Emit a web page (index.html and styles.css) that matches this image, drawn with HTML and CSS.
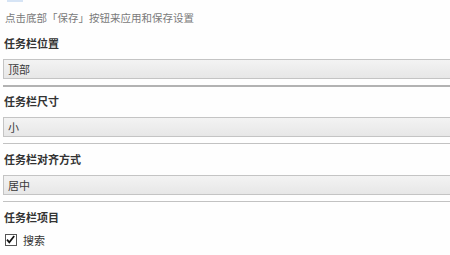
FILE: index.html
```html
<!DOCTYPE html>
<html lang="zh-CN">
<head>
<meta charset="utf-8">
<title>任务栏设置</title>
<link rel="stylesheet" href="styles.css">
</head>
<body>
<div class="page">
  <div class="stub"></div>
  <p class="hint">点击底部「保存」按钮来应用和保存设置</p>

  <section class="group">
    <h3 class="label">任务栏位置</h3>
    <div class="select">顶部</div>
    <div class="divider divider-strong"></div>
  </section>

  <section class="group">
    <h3 class="label">任务栏尺寸</h3>
    <div class="select">小</div>
    <div class="divider"></div>
  </section>

  <section class="group">
    <h3 class="label">任务栏对齐方式</h3>
    <div class="select">居中</div>
    <div class="divider"></div>
  </section>

  <section class="group">
    <h3 class="label">任务栏项目</h3>
    <label class="check">
      <span class="box">
        <svg width="11" height="11" viewBox="0 0 11 11"><path d="M2 5.6 L4.3 8.3 L9.2 2" fill="none" stroke="#111" stroke-width="1.7"/></svg>
      </span>
      <span class="check-text">搜索</span>
    </label>
  </section>
</div>
</body>
</html>
```

FILE: styles.css
```css
html, body {
  margin: 0;
  padding: 0;
  background: #fefefe;
}
body {
  font-family: "Noto Sans CJK SC", "Noto Sans", sans-serif;
  width: 450px;
  height: 255px;
  overflow: hidden;
}
.page {
  display: flex;
  flex-direction: column;
  padding-left: 3px;
}
.stub {
  width: 16px;
  height: 2px;
  margin-left: 4px;
  background: #d6e4f5;
}
.hint {
  margin: 10px 0 0 2px;
  font-size: 10.5px;
  line-height: 12px;
  color: #7a7a7a;
}
.group {
  display: flex;
  flex-direction: column;
}
.label {
  margin: 12px 0 0 1px;
  font-size: 11px;
  line-height: 14px;
  font-weight: 700;
  color: #333;
}
.group + .group .label {
  margin-top: 8px;
}
.select {
  margin-top: 9px;
  height: 18px;
  border: 1px solid #c4c4c4;
  border-right: none;
  background: linear-gradient(#f3f3f3, #e7e7e7);
  font-size: 11px;
  line-height: 18px;
  padding-left: 4px;
  color: #3a3a3a;
}
.divider {
  margin-top: 6px;
  height: 1px;
  background: #c2c2c2;
}
.divider-strong {
  height: 2px;
  background: #b2b2b2;
}
.group:first-of-type + .group .label {
  margin-top: 7px;
}
.check {
  margin-top: 9px;
  display: flex;
  align-items: center;
  gap: 6px;
  padding-left: 2px;
}
.box {
  width: 10px;
  height: 10px;
  border: 1px solid #555;
  background: #fff;
  display: flex;
}
.box svg {
  margin: -1px 0 0 -1px;
}
.check-text {
  font-size: 11px;
  line-height: 14px;
  color: #333;
}
```
